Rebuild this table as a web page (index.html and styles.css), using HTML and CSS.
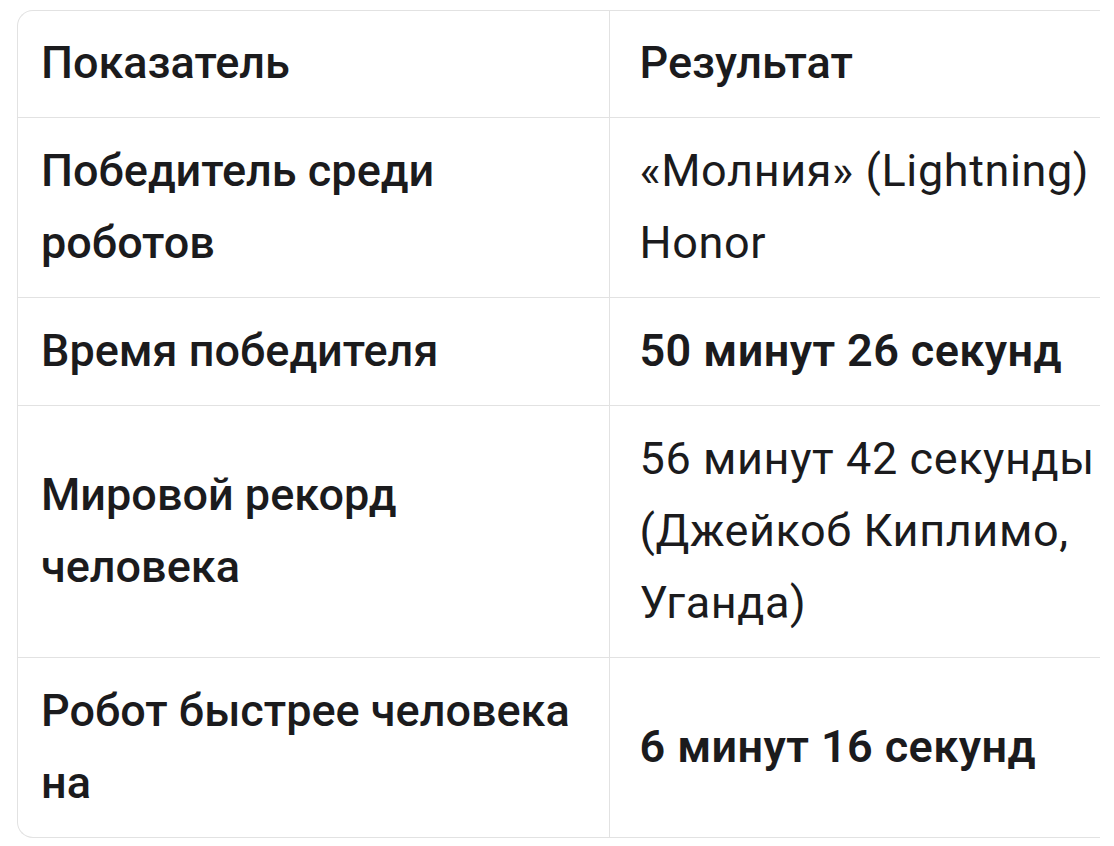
FILE: index.html
```html
<!DOCTYPE html>
<html lang="ru">
<head>
<meta charset="utf-8">
<link rel="stylesheet" href="styles.css">
</head>
<body>
<div class="wrap">
  <table class="tbl">
    <colgroup><col class="c1"><col class="c2"></colgroup>
    <thead>
      <tr><th>Показатель</th><th>Результат</th></tr>
    </thead>
    <tbody>
      <tr><td>Победитель среди роботов</td><td class="val">«Молния» (Lightning) Honor</td></tr>
      <tr><td>Время победителя</td><td class="val strong">50 минут 26 секунд</td></tr>
      <tr><td>Мировой рекорд человека</td><td class="val">56 минут 42 секунды (Джейкоб Киплимо, Уганда)</td></tr>
      <tr><td>Робот быстрее человека на</td><td class="val strong">6 минут 16 секунд</td></tr>
    </tbody>
  </table>
</div>
</body>
</html>
```
FILE: styles.css
```css
html, body { margin: 0; padding: 0; background: #ffffff; }
body { font-family: Roboto, "Liberation Sans", sans-serif; color: #1b1b1d; }
.wrap {
  margin: 10px 0 0 17px;
  width: 1082px;
  border: 1px solid #e2e2e2;
  border-right: none;
  border-radius: 16px 0 0 16px;
  overflow: hidden;
}
.tbl { width: 1140px; border-collapse: collapse; table-layout: fixed; }
.c1 { width: 591px; }
.tbl th, .tbl td {
  font-size: 45px;
  line-height: 72px;
  font-weight: 500;
  text-align: left;
  vertical-align: middle;
  padding: 17px 30px 18px 23px;
  border-bottom: 1px solid #e2e2e2;
}
.tbl th { padding-top: 16px; }
.tbl tbody tr:last-child td { border-bottom: none; }
.tbl th + th, .tbl td + td { border-left: 1px solid #e2e2e2; padding-left: 30px; }
.tbl .val { font-weight: 400; letter-spacing: 0.6px; }
.tbl .val.strong { font-weight: 600; letter-spacing: 0.4px; }
```
